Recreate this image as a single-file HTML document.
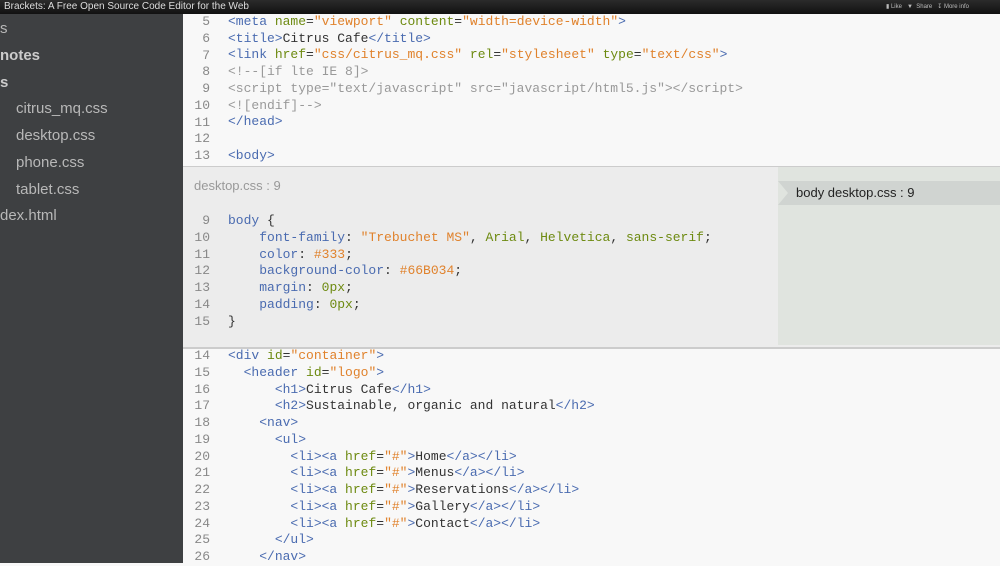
<!DOCTYPE html>
<html><head><style>
body{margin:0;width:1000px;height:563px;overflow:hidden;background:#f8f8f8;position:relative;font-family:"Liberation Sans",sans-serif;color:#333}
.top{position:absolute;left:0;top:0;width:1000px;height:14px;background:linear-gradient(#2b2b2b,#111);color:#ddd;font-size:10px;line-height:14px;z-index:2}
.side{position:absolute;left:0;top:14px;width:183px;height:549px;background:#3e4042}
.side div{position:absolute;color:#b8b8b8;font-size:15px;font-weight:bold}
.code{position:absolute;font-family:"Liberation Mono",monospace;font-size:13px;white-space:pre;line-height:16.75px;color:#333}
.ln{position:absolute;width:30px;text-align:right;color:#888;font-family:"Liberation Mono",monospace;font-size:13px;line-height:16.75px;white-space:pre}
.t{color:#4a6bb0}.a{color:#6d8a10}.s{color:#e0822c}.c{color:#999}.k{color:#4a6bb0}
</style></head><body>
<div class="top"><span style="margin-left:4px">Brackets: A Free Open Source Code Editor for the Web</span>
<span style="position:absolute;left:886px;font-size:6px;color:#bbb">▮ Like &nbsp; ▼ &nbsp;Share &nbsp; ↧ More info</span></div>
<div class="side">
<div style="left:0;top:6px;font-weight:normal">s</div>
<div style="left:0;top:33px;color:#ccc">notes</div>
<div style="left:0;top:60px;color:#ccc">s</div>
<div style="left:16px;top:86px;font-weight:normal">citrus_mq.css</div>
<div style="left:16px;top:113px;font-weight:normal">desktop.css</div>
<div style="left:16px;top:140px;font-weight:normal">phone.css</div>
<div style="left:16px;top:167px;font-weight:normal">tablet.css</div>
<div style="left:0;top:193px;font-weight:normal">dex.html</div>
</div>
<div class="ln" style="left:180px;top:14px">5
6
7
8
9
10
11
12
13</div>
<div class="code" style="left:228px;top:-3px"><span class="t" style="opacity:.5">&lt;meta http-equiv="Content-Type" content="text/html; charset=utf-8"&gt;</span>
<span class="t">&lt;meta</span> <span class="a">name</span>=<span class="s">"viewport"</span> <span class="a">content</span>=<span class="s">"width=device-width"</span><span class="t">&gt;</span>
<span class="t">&lt;title&gt;</span>Citrus Cafe<span class="t">&lt;/title&gt;</span>
<span class="t">&lt;link</span> <span class="a">href</span>=<span class="s">"css/citrus_mq.css"</span> <span class="a">rel</span>=<span class="s">"stylesheet"</span> <span class="a">type</span>=<span class="s">"text/css"</span><span class="t">&gt;</span>
<span class="c">&lt;!--[if lte IE 8]&gt;</span>
<span class="c">&lt;script type="text/javascript" src="javascript/html5.js"&gt;&lt;/script&gt;</span>
<span class="c">&lt;![endif]--&gt;</span>
<span class="t">&lt;/head&gt;</span>

<span class="t">&lt;body&gt;</span></div>
<div style="position:absolute;left:183px;top:166px;width:817px;height:180px;background:#ececec;border-top:1px solid #ccc;border-bottom:2px solid #ccc"></div>
<div style="position:absolute;left:778px;top:167px;width:222px;height:178px;background:#e0e4df"></div>
<div style="position:absolute;left:778px;top:181px;width:222px;height:24px;background:#d0d4d1"></div>
<div style="position:absolute;left:778px;top:181px;width:0;height:0;border-top:12px solid transparent;border-bottom:12px solid transparent;border-left:10px solid #e0e4df"></div>
<div style="position:absolute;left:796px;top:185px;font-size:13px;color:#222">body desktop.css : 9</div>
<div style="position:absolute;left:194px;top:178px;font-size:13px;color:#999">desktop.css : 9</div>
<div class="ln" style="left:180px;top:213px">9
10
11
12
13
14
15</div>
<div class="code" style="left:228px;top:213px"><span class="k">body</span> {
    <span class="k">font-family</span>: <span class="s">"Trebuchet MS"</span>, <span class="a">Arial</span>, <span class="a">Helvetica</span>, <span class="a">sans-serif</span>;
    <span class="k">color</span>: <span class="s">#333</span>;
    <span class="k">background-color</span>: <span class="s">#66B034</span>;
    <span class="k">margin</span>: <span class="a">0px</span>;
    <span class="k">padding</span>: <span class="a">0px</span>;
}</div>
<div class="ln" style="left:180px;top:348px">14
15
16
17
18
19
20
21
22
23
24
25
26</div>
<div class="code" style="left:228px;top:348px"><span class="t">&lt;div</span> <span class="a">id</span>=<span class="s">"container"</span><span class="t">&gt;</span>
  <span class="t">&lt;header</span> <span class="a">id</span>=<span class="s">"logo"</span><span class="t">&gt;</span>
      <span class="t">&lt;h1&gt;</span>Citrus Cafe<span class="t">&lt;/h1&gt;</span>
      <span class="t">&lt;h2&gt;</span>Sustainable, organic and natural<span class="t">&lt;/h2&gt;</span>
    <span class="t">&lt;nav&gt;</span>
      <span class="t">&lt;ul&gt;</span>
        <span class="t">&lt;li&gt;&lt;a</span> <span class="a">href</span>=<span class="s">"#"</span><span class="t">&gt;</span>Home<span class="t">&lt;/a&gt;&lt;/li&gt;</span>
        <span class="t">&lt;li&gt;&lt;a</span> <span class="a">href</span>=<span class="s">"#"</span><span class="t">&gt;</span>Menus<span class="t">&lt;/a&gt;&lt;/li&gt;</span>
        <span class="t">&lt;li&gt;&lt;a</span> <span class="a">href</span>=<span class="s">"#"</span><span class="t">&gt;</span>Reservations<span class="t">&lt;/a&gt;&lt;/li&gt;</span>
        <span class="t">&lt;li&gt;&lt;a</span> <span class="a">href</span>=<span class="s">"#"</span><span class="t">&gt;</span>Gallery<span class="t">&lt;/a&gt;&lt;/li&gt;</span>
        <span class="t">&lt;li&gt;&lt;a</span> <span class="a">href</span>=<span class="s">"#"</span><span class="t">&gt;</span>Contact<span class="t">&lt;/a&gt;&lt;/li&gt;</span>
      <span class="t">&lt;/ul&gt;</span>
    <span class="t">&lt;/nav&gt;</span></div>
</body></html>
